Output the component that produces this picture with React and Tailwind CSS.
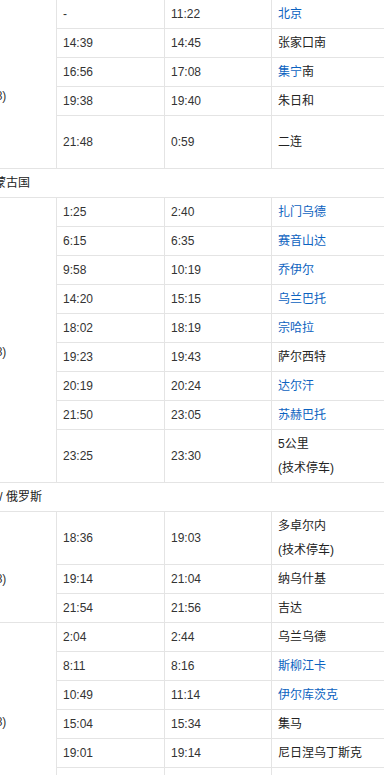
import React from "react";

const B = "#0b62c0";

const blocks = [
  {
    type: "block",
    zone: ["中国", "(UTC+8)"],
    rows: [
      ["-", "11:22", [[["北京", 1]]]],
      ["14:39", "14:45", [[["张家口南", 0]]]],
      ["16:56", "17:08", [[["集宁", 1], ["南", 0]]]],
      ["19:38", "19:40", [[["朱日和", 0]]]],
      ["21:48", "0:59", [[["二连", 0]]], true],
    ],
  },
  { type: "country", text: "中国 / 蒙古国" },
  {
    type: "block",
    zone: ["蒙古", "(UTC+8)"],
    rows: [
      ["1:25", "2:40", [[["扎门乌德", 1]]]],
      ["6:15", "6:35", [[["赛音山达", 1]]]],
      ["9:58", "10:19", [[["乔伊尔", 1]]]],
      ["14:20", "15:15", [[["乌兰巴托", 1]]]],
      ["18:02", "18:19", [[["宗哈拉", 1]]]],
      ["19:23", "19:43", [[["萨尔西特", 0]]]],
      ["20:19", "20:24", [[["达尔汗", 1]]]],
      ["21:50", "23:05", [[["苏赫巴托", 1]]]],
      ["23:25", "23:30", [[["5公里", 0]], [["(技术停车)", 0]]]],
    ],
  },
  { type: "country", text: "蒙古国 / 俄罗斯" },
  {
    type: "block",
    zone: ["俄国", "(UTC+8)"],
    rows: [
      ["18:36", "19:03", [[["多卓尔内", 0]], [["(技术停车)", 0]]]],
      ["19:14", "21:04", [[["纳乌什基", 0]]]],
      ["21:54", "21:56", [[["吉达", 0]]]],
    ],
  },
  {
    type: "block",
    zone: ["俄国", "(UTC+8)"],
    rows: [
      ["2:04", "2:44", [[["乌兰乌德", 0]]]],
      ["8:11", "8:16", [[["斯柳江卡", 1]]]],
      ["10:49", "11:14", [[["伊尔库茨克", 1]]]],
      ["15:04", "15:34", [[["集马", 0]]]],
      ["19:01", "19:14", [[["尼日涅乌丁斯克", 0]]]],
      ["23:10", "23:25", [[["克拉斯诺亚尔斯克", 0]]]],
    ],
  },
];

function Station({ lines }) {
  return (
    <div className="flex flex-col justify-center pl-[6px]">
      {lines.map((parts, i) => (
        <div key={i} className="whitespace-nowrap">
          {parts.map(([t, link], j) => (
            <span key={j} className={link ? "text-[#0b62c0]" : "text-[#222]"}>
              {t}
            </span>
          ))}
        </div>
      ))}
    </div>
  );
}

function Row({ r, last }) {
  const [a, d, st, tall] = r;
  return (
    <div
      className={`grid grid-cols-[108px_107px_1fr] ${
        last ? "" : "border-b border-[#e4e4e4]"
      } ${tall ? "min-h-[52px]" : ""}`}
    >
      <div className="flex items-center border-r border-[#e4e4e4] py-[2px] pl-[6px] text-[#333]">
        {a}
      </div>
      <div className="flex items-center border-r border-[#e4e4e4] py-[2px] pl-[6px] text-[#333]">
        {d}
      </div>
      <div className="flex items-center py-[2px]">
        <Station lines={st} />
      </div>
    </div>
  );
}

export default function App() {
  return (
    <div className="w-[384px] h-[775px] overflow-hidden bg-white">
      <div
        className="-ml-[46px] -mt-px w-[460px] text-[12px] leading-[24px]"
        style={{ fontFamily: '"Liberation Sans", Arial, "Noto Sans CJK SC", sans-serif' }}
      >
        <div className="border-t border-[#e4e4e4]">
          {blocks.map((b, i) =>
            b.type === "country" ? (
              <div
                key={i}
                className="border-b border-[#e4e4e4] py-[2px] pl-[6px] text-[#222] whitespace-nowrap"
              >
                {b.text}
              </div>
            ) : (
              <div key={i} className="flex border-b border-[#e4e4e4]">
                <div className="w-[103px] shrink-0 border-r border-[#e4e4e4] flex flex-col justify-center pl-[6px] text-[#333] whitespace-nowrap">
                  <div>{b.zone[0]}</div>
                  <div>{b.zone[1]}</div>
                </div>
                <div className="flex-1 flex flex-col">
                  {b.rows.map((r, j) => (
                    <Row key={j} r={r} last={j === b.rows.length - 1} />
                  ))}
                </div>
              </div>
            )
          )}
        </div>
      </div>
    </div>
  );
}
